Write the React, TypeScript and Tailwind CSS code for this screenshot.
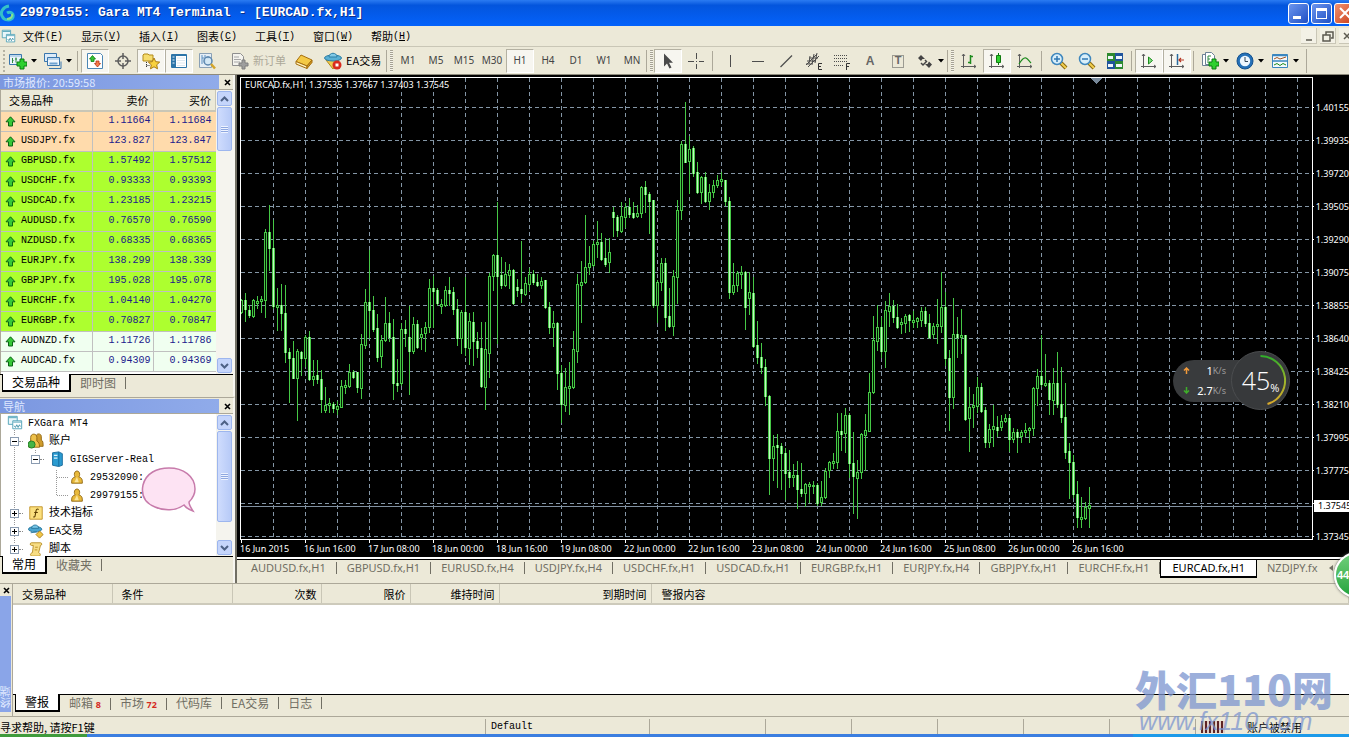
import React from "react";

const mono = "font-['Liberation_Mono','Noto_Sans_CJK_SC',monospace]";
const cjk = "font-['Noto_Sans_CJK_SC',sans-serif]";
const chartFont = "font-['Noto_Sans',sans-serif]";

const menus = [
  ["文件", "F"],
  ["显示", "V"],
  ["插入", "I"],
  ["图表", "C"],
  ["工具", "T"],
  ["窗口", "W"],
  ["帮助", "H"],
];

const quotes = [
  { symbol: "EURUSD.fx", bid: "1.11664", ask: "1.11684", bg: "bg-[#ffdbac]" },
  { symbol: "USDJPY.fx", bid: "123.827", ask: "123.847", bg: "bg-[#ffdbac]" },
  { symbol: "GBPUSD.fx", bid: "1.57492", ask: "1.57512", bg: "bg-[#adff2f]" },
  { symbol: "USDCHF.fx", bid: "0.93333", ask: "0.93393", bg: "bg-[#adff2f]" },
  { symbol: "USDCAD.fx", bid: "1.23185", ask: "1.23215", bg: "bg-[#adff2f]" },
  { symbol: "AUDUSD.fx", bid: "0.76570", ask: "0.76590", bg: "bg-[#adff2f]" },
  { symbol: "NZDUSD.fx", bid: "0.68335", ask: "0.68365", bg: "bg-[#adff2f]" },
  { symbol: "EURJPY.fx", bid: "138.299", ask: "138.339", bg: "bg-[#adff2f]" },
  { symbol: "GBPJPY.fx", bid: "195.028", ask: "195.078", bg: "bg-[#adff2f]" },
  { symbol: "EURCHF.fx", bid: "1.04140", ask: "1.04270", bg: "bg-[#adff2f]" },
  { symbol: "EURGBP.fx", bid: "0.70827", ask: "0.70847", bg: "bg-[#adff2f]" },
  { symbol: "AUDNZD.fx", bid: "1.11726", ask: "1.11786", bg: "bg-[#f0fff0]" },
  { symbol: "AUDCAD.fx", bid: "0.94309", ask: "0.94369", bg: "bg-[#f0fff0]" },
];

const periods = ["M1", "M5", "M15", "M30", "H1", "H4", "D1", "W1", "MN"];

const chartTabs = [
  "AUDUSD.fx,H1",
  "GBPUSD.fx,H1",
  "EURUSD.fx,H4",
  "USDJPY.fx,H4",
  "USDCHF.fx,H1",
  "USDCAD.fx,H1",
  "EURGBP.fx,H1",
  "EURJPY.fx,H4",
  "GBPJPY.fx,H1",
  "EURCHF.fx,H1",
  "EURCAD.fx,H1",
];

const prices = [
  "1.40155", "1.39935", "1.39720", "1.39505", "1.39290", "1.39075", "1.38855",
  "1.38640", "1.38425", "1.38210", "1.37995", "1.37775", "1.37560", "1.37345",
];

const times = [
  "16 Jun 2015", "16 Jun 16:00", "17 Jun 08:00", "18 Jun 00:00", "18 Jun 16:00",
  "19 Jun 08:00", "22 Jun 00:00", "22 Jun 16:00", "23 Jun 08:00", "24 Jun 00:00",
  "24 Jun 16:00", "25 Jun 08:00", "26 Jun 00:00", "26 Jun 16:00",
];

// high, body top, body bottom, low, 1 = bull / 0 = bear
const candles = [
  [221,222,234,235,1],[215,222,231,243,0],[227,232,237,239,0],[221,222,238,239,1],[218,223,225,230,1],
  [218,221,223,234,1],[151,154,222,239,1],[127,154,170,192,0],[142,170,228,230,0],[210,227,229,252,1],
  [206,227,235,252,0],[207,235,274,284,0],[270,274,280,324,0],[263,280,300,300,0],[271,273,300,342,1],
  [273,274,280,297,0],[257,259,280,288,1],[253,259,301,302,0],[282,298,301,307,1],[282,297,301,305,0],
  [292,301,321,334,0],[309,327,332,334,1],[320,325,327,334,1],[324,326,330,334,0],[323,328,331,336,1],
  [302,308,329,329,1],[302,307,309,315,1],[286,294,308,309,1],[292,294,299,300,0],[294,294,309,314,0],
  [256,266,310,320,1],[211,224,267,270,1],[172,224,232,260,0],[218,232,251,253,0],[236,250,279,283,0],
  [257,262,278,289,1],[219,245,262,263,1],[234,245,259,263,0],[241,259,305,321,0],[281,305,307,313,0],
  [245,251,305,307,1],[242,251,255,268,0],[228,259,273,316,0],[239,246,273,275,1],[242,246,269,270,0],
  [250,256,259,271,1],[244,249,255,273,1],[201,210,249,254,1],[198,210,213,249,0],[210,212,225,227,0],
  [221,226,228,235,1],[208,212,227,228,1],[199,212,215,227,0],[209,214,231,236,0],[221,231,260,267,0],
  [232,234,260,275,1],[199,234,269,277,0],[235,243,270,286,1],[234,244,263,287,0],[254,263,270,279,0],
  [244,270,308,309,0],[244,271,309,331,1],[195,198,275,299,1],[176,177,198,212,1],[124,177,198,265,0],
  [179,197,207,210,0],[184,196,207,208,1],[186,192,197,210,1],[191,192,225,226,0],[201,209,212,218,0],
  [163,211,215,224,0],[199,205,216,217,1],[190,196,206,212,1],[192,196,204,206,0],[196,204,207,208,0],
  [199,203,207,210,1],[202,202,229,230,0],[224,229,249,255,0],[233,245,249,268,1],[244,245,295,311,0],
  [287,295,326,344,0],[290,309,327,333,1],[284,308,310,336,1],[253,271,309,310,1],[196,206,273,284,1],
  [183,204,207,244,1],[137,189,204,205,1],[168,185,189,196,1],[163,166,187,188,1],[143,164,166,179,1],
  [155,164,181,182,0],[160,180,186,188,0],[160,174,184,194,1],[129,134,139,158,0],[137,139,152,158,0],
  [124,138,153,154,1],[125,129,139,149,1],[120,129,136,139,0],[124,135,139,140,0],[127,135,138,139,1],
  [108,109,135,139,1],[103,109,116,134,0],[114,116,123,155,0],[122,122,227,229,0],[202,204,227,244,1],
  [180,185,204,212,1],[180,185,239,252,0],[210,238,248,249,0],[192,198,248,257,1],[122,132,199,225,1],
  [63,66,132,141,1],[24,66,84,84,0],[58,71,83,115,1],[68,70,95,98,0],[84,94,114,115,0],
  [98,99,114,125,1],[94,99,123,124,0],[106,114,123,131,1],[102,107,114,119,1],[97,102,107,109,1],
  [94,101,103,107,1],[102,102,123,127,0],[119,123,214,220,0],[185,207,214,216,1],[193,195,207,213,1],
  [188,194,196,210,1],[193,194,229,251,0],[194,214,220,236,1],[199,215,268,269,0],[243,267,279,285,0],
  [265,279,289,295,0],[281,289,318,327,0],[317,318,380,416,0],[357,368,380,402,1],[356,367,369,409,0],
  [365,368,375,411,0],[370,375,395,421,0],[372,394,399,409,0],[386,397,399,408,1],[383,397,411,430,0],
  [385,411,415,418,0],[405,406,415,428,1],[404,406,408,424,1],[403,407,408,415,1],[405,407,425,427,0],
  [403,419,424,427,1],[390,393,419,420,1],[383,384,392,399,1],[375,383,385,390,1],[335,353,384,390,1],
  [335,353,356,372,0],[330,337,355,374,1],[335,337,385,399,0],[354,385,398,435,0],[382,394,400,440,1],
  [355,356,394,400,1],[336,352,357,392,1],[295,314,353,353,1],[238,262,314,315,1],[227,249,263,272,1],
  [239,249,273,279,0],[223,232,273,289,1],[215,228,233,248,1],[222,228,239,244,0],[226,239,249,250,0],
  [240,244,246,255,1],[236,238,245,254,1],[236,237,242,253,0],[233,242,244,249,1],[239,240,243,249,1],
  [229,233,242,248,1],[229,233,245,248,0],[236,245,259,260,0],[245,248,256,260,1],[221,246,248,265,1],
  [194,229,248,254,1],[214,229,280,287,0],[272,280,319,352,0],[220,256,319,330,1],[239,256,259,279,0],
  [231,257,259,275,1],[257,257,341,342,0],[309,329,340,373,1],[316,327,329,349,1],[299,309,328,334,1],
  [305,309,333,334,0],[329,332,364,369,0],[346,351,364,369,1],[327,348,351,368,1],[338,349,352,358,0],
  [337,343,349,352,1],[336,340,343,344,1],[337,340,361,373,0],[350,354,361,364,1],[351,354,359,374,0],
  [352,354,358,364,1],[345,352,354,358,1],[349,350,352,364,1],[309,310,350,357,1],[291,298,310,327,1],
  [257,298,306,308,0],[276,305,307,308,1],[302,305,321,336,0],[290,305,322,336,1],[274,305,326,329,0],
  [289,326,339,344,0],[305,339,374,380,0],[365,373,384,420,0],[377,384,416,419,0],[403,416,439,449,0],
  [419,439,441,449,1],[424,429,440,441,1],[409,427,430,449,1],
];

function Svg({ children, size = 18 }: { children: React.ReactNode; size?: number }) {
  return (
    <svg width={size} height={size} viewBox="0 0 18 18" fill="none" className="shrink-0" aria-hidden="true">
      {children}
    </svg>
  );
}

const plus = (
  <path d="M11 7h4v3h3v4h-3v3h-4v-3H8v-4h3z" fill="#2fd02f" stroke="#0b7d12" />
);

const icons: Record<string, React.ReactNode> = {
  windows: (
    <>
      <path d="M1.500 1.500h10v9h-10z" fill="#e8f6fa" stroke="#4a9fb5" />
      <path d="M2 3h9" stroke="#4a9fb5" />
      <path d="M6.500 6.500h10v9h-10z" fill="#fff" stroke="#4a9fb5" />
      <path d="M7 8h9" stroke="#4a9fb5" />
      <path d="M8 12l1.500 2 1.500-3 1.500 3 1.500-3 1 2" stroke="#3c8fa5" />
    </>
  ),
  newChart: (
    <>
      <path d="M.5 2.500h12v10H.5z" fill="#eaf3fb" stroke="#3a76ad" />
      <path d="M1 4h11" stroke="#8fb8dc" />
      <path d="M3.500 6v5M3 8.500h1.500M7 5.500v5M6 7h2" stroke="#2e8b40" />
      {plus}
    </>
  ),
  profiles: (
    <>
      <path d="M.5 1.500h12v8H.5z" fill="#dcebf8" stroke="#3a76ad" />
      <path d="M3.500 5.500h12v8h-12z" fill="#eef6fd" stroke="#3a76ad" />
      <path d="M4 7h11" stroke="#8fb8dc" />
      <path d="M5 16.500h12v-7" stroke="#3a76ad" />
      <path d="M5.500 11.500h8" stroke="#6fa3d0" strokeWidth="2" />
    </>
  ),
  market: (
    <>
      <path d="M1.500 1.500h13l2 2v13h-15z" fill="#fff" stroke="#4c86b5" />
      <path d="M6.500 3.500l3 3.500H8v2.500H5V7H3.500z" fill="#35c135" stroke="#0b7d12" strokeWidth=".8" />
      <path d="M11.500 15l-3-3.500H10V9h3v2.500h1.500z" fill="#f47a4a" stroke="#b53413" strokeWidth=".8" />
    </>
  ),
  target: (
    <>
      <circle cx="9" cy="9" r="5" stroke="#5d5d5d" strokeWidth="1.500" />
      <path d="M9 1v6M9 11v6M1 9h6M11 9h6" stroke="#5d5d5d" strokeWidth="1.500" />
    </>
  ),
  navigator: (
    <>
      <path d="M1 3l1-1h4l1 1h4v6H1z" fill="#f6dc6c" stroke="#b18a1b" />
      <path d="M4.500 10v6M4.500 13.500H8" stroke="#333" strokeDasharray="1 1" />
      <path d="M12 6l1.700 3.700 4 .4-3 2.700.8 4L12 14.800 8.500 16.800l.8-4-3-2.700 4-.4z" fill="#f9d23e" stroke="#a97a10" />
    </>
  ),
  terminal: (
    <>
      <rect x="1" y="2" width="16" height="14" rx="1" fill="#2c74a8" />
      <path d="M6 4h10v11H6z" fill="#fff" />
      <path d="M2.500 5h2M2.500 8h2M2.500 11h2" stroke="#e8f3fb" />
      <path d="M7 6h8M7 8.500h8M7 11h8M7 13.500h8" stroke="#dde8f0" />
    </>
  ),
  tester: (
    <>
      <path d="M1.500 1.500h12v14h-12z" fill="#e5eef6" stroke="#8aa0b5" />
      <path d="M4 3v9M4 6h2M7 3v8M10 4v3" stroke="#5a8fc0" />
      <circle cx="10" cy="9" r="4" fill="#cfe6f5" fillOpacity=".8" stroke="#5b86ae" strokeWidth="1.500" />
      <path d="M13 12l4 4.500" stroke="#d3a52a" strokeWidth="2.500" />
    </>
  ),
  order: (
    <>
      <path d="M1.500 1.500h8l3 3v9h-11z" fill="#f4f3ee" stroke="#8f8f8f" />
      <path d="M3 5h5M3 7.500h7M3 10h6" stroke="#a6a6a6" />
      <path d="M11 8h3v3h3v3h-3v3h-3v-3H8v-3h3z" fill="#9e9e9e" stroke="#7e7e7e" />
    </>
  ),
  editor: (
    <>
      <path d="M6 3l11 5-5 6L1 9.500z" fill="#f4c945" stroke="#a66f0d" />
      <path d="M1 9.500V12l11 4.500V14z" fill="#fff1bd" stroke="#a66f0d" />
      <path d="M12 16.500l5-6V8l-5 6z" fill="#d19a24" stroke="#a66f0d" />
    </>
  ),
  expert: (
    <>
      <path d="M2 8l7 9 6-9z" fill="#f0c94e" stroke="#b08a1d" />
      <ellipse cx="9" cy="6" rx="8.500" ry="3" fill="#5ab0d4" stroke="#2c7ea5" />
      <path d="M5 5c0-5 8-5 8 0z" fill="#82c9e6" stroke="#2c7ea5" />
      <circle cx="13" cy="13" r="4.500" fill="#d92b1e" />
      <path d="M11.500 11.500h3v3h-3z" fill="#fff" />
    </>
  ),
  cursor: <path d="M5 1.500v13l3-3 2.500 5 2-1-2.500-4.800h4z" fill="#4a4a4a" />,
  cross: <path d="M9.500 1v6M9.500 12v5M1 9.500h6M12 9.500h5M9 9.500h1" stroke="#4d4d4d" />,
  vline: <path d="M9.500 3v12" stroke="#4d4d4d" />,
  hline: <path d="M3 9.500h12" stroke="#4d4d4d" />,
  trend: <path d="M3.500 15L15 3.500" stroke="#4d4d4d" strokeWidth="1.200" />,
  channel: (
    <>
      <path d="M1 13L12 2M3 15L14 4M2 9h9M4 6h9M1 12h7M5 4l-1 8M9 2L7 12M12 1l-2 10" stroke="#4d4d4d" />
      <path d="M17 11.500h-3.500v6H17M13 14.500h3" stroke="#333" />
    </>
  ),
  fib: (
    <>
      <path d="M1 3.500h13M1 6.500h13M1 9.500h13M1 13.500h9" stroke="#4d4d4d" strokeDasharray="1 1" />
      <path d="M17 11.500h-3.500V18M13 14.500h3" stroke="#333" />
    </>
  ),
  label: <path d="M3.500 3.500h11v12h-11z" stroke="#4d4d4d" strokeDasharray="1 1" />,
  arrows: (
    <>
      <path d="M5 3l4 4H6.500L5 9 2 6zM13 16l-4-4h2.500L13 9.500l3 3z" fill="#444" />
      <path d="M9 8l2 2M5 11l2 2 3-3" stroke="#444" strokeWidth="1.500" />
    </>
  ),
  bars: (
    <>
      <path d="M3.500 2v14M1 14.500h15M2 4l1.500-2L5 4M14 13l2 1.500-2 1.500" stroke="#5d5d5d" />
      <path d="M10.500 3v9M8 10.500h2.500M10.500 4.500H13" stroke="#1c8a1c" strokeWidth="1.500" />
    </>
  ),
  candles: (
    <>
      <path d="M3.500 2v14M1 14.500h15M2 4l1.500-2L5 4M14 13l2 1.500-2 1.500" stroke="#5d5d5d" />
      <path d="M10.500 1v12" stroke="#117a11" />
      <path d="M8.500 3.500h4v7h-4z" fill="#2fd02f" stroke="#117a11" />
    </>
  ),
  line: (
    <>
      <path d="M3.500 2v14M1 14.500h15M2 4l1.500-2L5 4M14 13l2 1.500-2 1.500" stroke="#5d5d5d" />
      <path d="M3 12c3-5 5-7 7-6s3 3 5 5" stroke="#1c8a1c" strokeWidth="1.200" />
    </>
  ),
  zoomIn: (
    <>
      <path d="M11 11l5 5" stroke="#8a6a10" strokeWidth="4" />
      <path d="M11 11l5 5" stroke="#f2cf4f" strokeWidth="2" />
      <circle cx="7" cy="7" r="5.500" fill="#d9effa" stroke="#3f87bd" strokeWidth="1.500" />
      <path d="M4 7h6M7 4v6" stroke="#2f78b3" strokeWidth="1.500" />
    </>
  ),
  zoomOut: (
    <>
      <path d="M11 11l5 5" stroke="#8a6a10" strokeWidth="4" />
      <path d="M11 11l5 5" stroke="#f2cf4f" strokeWidth="2" />
      <circle cx="7" cy="7" r="5.500" fill="#d9effa" stroke="#3f87bd" strokeWidth="1.500" />
      <path d="M4 7h6" stroke="#2f78b3" strokeWidth="1.500" />
    </>
  ),
  tile: (
    <>
      <path d="M1 1h8v8H1z" fill="#2d8a2f" />
      <path d="M9 1h8v8H9z" fill="#1f549b" />
      <path d="M1 9h8v8H1z" fill="#1f549b" />
      <path d="M9 9h8v8H9z" fill="#2d8a2f" />
      <path d="M2 4h5v3H2zM10 4h6v3h-6zM2 12h5v3H2zM10 12h6v3h-6z" fill="#eef6fb" />
    </>
  ),
  scroll: (
    <>
      <path d="M3.500 2v14M1 14.500h15M2 4l1.500-2L5 4M14 13l2 1.500-2 1.500" stroke="#5d5d5d" />
      <path d="M8.500 5v7l4-3.500z" fill="#7fe07f" stroke="#1c8a1c" />
    </>
  ),
  shift: (
    <>
      <path d="M3.500 2v14M1 14.500h15M2 4l1.500-2L5 4M14 13l2 1.500-2 1.500" stroke="#5d5d5d" />
      <path d="M9.500 2v11" stroke="#276a9e" strokeWidth="1.500" />
      <path d="M16 8h-5M13 6l-2 2 2 2" stroke="#b5331f" strokeWidth="1.200" />
    </>
  ),
  template: (
    <>
      <path d="M1.500 2.500h7v11h-7z" fill="#fff" stroke="#6d8296" />
      <path d="M4.500.5h6l3 3v9h-9z" fill="#fff" stroke="#6d8296" />
      <path d="M7 4v7M7 4h3M7 7h2" stroke="#2e8b40" />
      {plus}
    </>
  ),
  clock: (
    <>
      <circle cx="9" cy="9" r="8" fill="#2470b8" stroke="#13508d" />
      <circle cx="9" cy="9" r="5.200" fill="#eef7ff" />
      <path d="M9 5v4.500h3" stroke="#33475b" />
    </>
  ),
  indicators: (
    <>
      <path d="M1.500 2.500h15v13h-15z" fill="#f3f9fd" stroke="#3a86bf" />
      <path d="M1 3.500h16M1 9h16" stroke="#3a86bf" strokeWidth="1.500" />
      <path d="M3 7l3-1.500L9 7l3-1 3-1" stroke="#a4541d" />
      <path d="M3 13l3-1.500L9 13.500l3-2 3 1.500" stroke="#1c8a1c" />
    </>
  ),
  account: (
    <>
      <path d="M6 6c0-5 6-5 6 0 0 2-1 3-1 3 4 1 4 3 4 7H3c0-4 0-6 4-7 0 0-1-1-1-3z" fill="#e8b93a" stroke="#8f6410" />
      <path d="M9 9l-3 6h5z" fill="#fbe59a" />
    </>
  ),
  accounts: (
    <>
      <path d="M9 4c0-4 6-4 6 0v4c2 1 2 3 2 7H9z" fill="#cf9c2c" stroke="#8f6410" />
      <path d="M3 5c0-5 7-5 7 0v4c2 1 3 3 3 7H1c0-4 0-6 2-7z" fill="#eec14a" stroke="#8f6410" />
      <circle cx="4" cy="13" r="4" fill="#45b445" stroke="#1d7a22" />
    </>
  ),
  server: (
    <>
      <path d="M4 2l7-1 4 2v13l-4 1.500L4 16z" fill="#2b9bd0" stroke="#14689a" />
      <path d="M11 1v16" stroke="#14689a" />
      <path d="M5.500 5h4M5.500 8h4" stroke="#dff3fd" strokeWidth="1.500" />
    </>
  ),
  fx: (
    <>
      <path d="M2 2h14v14H2z" fill="#fbe07e" stroke="#c08f22" />
      <path d="M12 5c-2-1-3 0-3 2l-1 5c0 1-1 2-2 1M7 8.500h4" stroke="#5a3d00" strokeWidth="1.200" />
    </>
  ),
  ea: (
    <>
      <ellipse cx="8" cy="7" rx="7.500" ry="3" fill="#4aa5d0" stroke="#26759c" />
      <path d="M4 6c0-5 8-5 8 0z" fill="#77c4e4" stroke="#26759c" />
      <path d="M3 11l7-1" stroke="#26759c" />
      <path d="M13 9l4 4-4 4-4-4z" fill="#f2c746" stroke="#a67916" />
    </>
  ),
  script: (
    <>
      <path d="M4 2h10c2 0 2 3 0 3l-2 8c2 1 3 4 0 4H5c-3 0-3-3 0-4l1-8H4C2 5 2 2 4 2z" fill="#f7dd84" stroke="#b58b22" />
      <path d="M8 7h3M7.500 10h3" stroke="#b58b22" />
    </>
  ),
};

function ToolButton({ icon, label, pressed, menu }: { icon: string; label: string; pressed?: boolean; menu?: boolean }) {
  return (
    <button
      aria-label={label}
      className={
        "h-6 shrink-0 flex items-center " +
        (menu ? "w-[35px] pl-1 gap-1 " : "w-7 justify-center ") +
        (pressed ? "bg-[#f7f6f0] border border-[#b4b1a2] border-r-white border-b-white" : "")
      }
    >
      <Svg>{icons[icon]}</Svg>
      {menu && <Caret />}
    </button>
  );
}

function Caret() {
  return (
    <svg width="6" height="4" viewBox="0 0 6 4" className="shrink-0" aria-hidden="true">
      <path d="M0 0h6L3 3.500z" fill="#000" />
    </svg>
  );
}

function Separator() {
  return <span className="w-px h-5 mx-[2px] mr-[3px] shrink-0 bg-[#aca899]" />;
}

function Gripper() {
  return (
    <span className="w-2 h-[22px] shrink-0 flex justify-between border-l border-[#aca899] pl-[3px] pr-px">
      <span className="w-[3px] bg-[repeating-linear-gradient(#a5a294_0_1px,#f5f3ea_1px_2px)]" />
    </span>
  );
}

function Toolbar() {
  return (
    <div className="h-[29px] shrink-0 flex items-center bg-[#ece9d8] border-t border-b border-t-[#c9c6b6] border-b-[#8d8a7c] pr-1">
      <span className="w-[5px] h-[22px] shrink-0 border-r-2 border-dotted border-[#b5b2a3]" />
      <ToolButton icon="newChart" label="新图表" menu />
      <ToolButton icon="profiles" label="配置" menu />
      <Separator />
      <ToolButton icon="market" label="市场报价" pressed />
      <ToolButton icon="target" label="数据窗口" />
      <ToolButton icon="navigator" label="导航" pressed />
      <ToolButton icon="terminal" label="终端" pressed />
      <ToolButton icon="tester" label="测试" />
      <button className="h-6 w-[69px] shrink-0 flex items-center gap-1 pl-[10px] text-[11px] whitespace-nowrap text-[#aca899]">
        <Svg>{icons.order}</Svg>新订单
      </button>
      <ToolButton icon="editor" label="编辑器" />
      <button className="h-6 w-[68px] shrink-0 flex items-center gap-1 pl-[6px] text-[11px] whitespace-nowrap">
        <Svg>{icons.expert}</Svg>EA交易
      </button>
      <Gripper />
      {periods.map((p) => (
        <button
          key={p}
          className={
            "w-7 h-6 shrink-0 font-['Noto_Sans',sans-serif] text-[10px] text-[#444] " +
            (p === "H1" ? "bg-[#f7f6f0] border border-[#b4b1a2] border-r-white border-b-white" : "")
          }
        >
          {p}
        </button>
      ))}
      <Gripper />
      <ToolButton icon="cursor" label="光标" pressed />
      <ToolButton icon="cross" label="十字" />
      <Separator />
      <ToolButton icon="vline" label="垂直线" />
      <ToolButton icon="hline" label="水平线" />
      <ToolButton icon="trend" label="趋势线" />
      <ToolButton icon="channel" label="通道" />
      <ToolButton icon="fib" label="斐波那契" />
      <button className="w-7 h-6 shrink-0 font-['Liberation_Sans',sans-serif] text-xs font-bold text-[#666]">A</button>
      <button className="w-7 h-6 shrink-0 grid place-items-center font-['Liberation_Sans',sans-serif] text-[11px] font-bold text-[#666]">
        <span className="col-start-1 row-start-1">
          <Svg>{icons.label}</Svg>
        </span>
        <span className="col-start-1 row-start-1">T</span>
      </button>
      <ToolButton icon="arrows" label="箭头" menu />
      <Gripper />
      <ToolButton icon="bars" label="柱状图" />
      <ToolButton icon="candles" label="阴阳烛" pressed />
      <ToolButton icon="line" label="折线图" />
      <Separator />
      <ToolButton icon="zoomIn" label="放大" />
      <ToolButton icon="zoomOut" label="缩小" />
      <ToolButton icon="tile" label="平铺" />
      <Separator />
      <ToolButton icon="scroll" label="自动滚动" pressed />
      <ToolButton icon="shift" label="图表平移" pressed />
      <Separator />
      <ToolButton icon="template" label="模板" menu />
      <ToolButton icon="clock" label="时间周期" menu />
      <ToolButton icon="indicators" label="技术指标" menu />
      <span className="w-px h-6 ml-1 shrink-0 bg-[#aca899]" />
    </div>
  );
}

function TitleBar() {
  return (
    <header className="h-[26px] shrink-0 flex items-center justify-between bg-linear-to-b from-[#2a7bf2] via-[#0355dd] via-20% to-[#0462fb]">
      <div className="flex items-center gap-[5px]">
        <svg width="15" height="18" viewBox="0 0 15 18" fill="none" aria-hidden="true">
          <path d="M9 2C3 3 0 8 2 12c2 5 9 5 11 1 1-4-3-6-6-4" stroke="#35c0c9" strokeWidth="3" />
          <path d="M12 10c1 3-2 5-5 5" stroke="#8be08a" strokeWidth="2" />
        </svg>
        <h1 className={`${mono} text-[13px] font-bold text-white whitespace-pre [text-shadow:1px_1px_0_#0a2e88]`}>
          29979155: Gara MT4 Terminal - [EURCAD.fx,H1]
        </h1>
      </div>
      <div className="flex gap-[2px] -mr-[6px]">
        <button aria-label="最小化" className="w-[21px] h-[21px] rounded-[3px] border border-white bg-linear-to-br from-[#6c95ee] to-[#1f4fc4] flex items-end p-1">
          <span className="w-2 h-[3px] bg-white" />
        </button>
        <button aria-label="最大化" className="w-[21px] h-[21px] rounded-[3px] border border-white bg-linear-to-br from-[#6c95ee] to-[#1f4fc4] flex items-center justify-center">
          <span className="w-[11px] h-[11px] border border-t-[3px] border-white" />
        </button>
        <button aria-label="关闭" className="w-[21px] h-[21px] rounded-[3px] border border-white bg-linear-to-br from-[#f0916f] to-[#c93a12] flex items-center justify-center">
          <svg width="12" height="12" viewBox="0 0 12 12" aria-hidden="true">
            <path d="M1 1l10 10M11 1L1 11" stroke="#fff" strokeWidth="2" />
          </svg>
        </button>
      </div>
    </header>
  );
}

function MenuBar() {
  return (
    <nav className="h-5 shrink-0 flex items-center justify-between bg-[#ece9d8]">
      <div className="flex items-center">
        <span className="ml-px mr-[7px]">
          <Svg size={15}>{icons.windows}</Svg>
        </span>
        {menus.map(([name, key]) => (
          <button key={key} className="flex items-center w-[58px] text-[11px]">
            {name}
            <span className={`${mono} text-[10px]`}>
              (<u>{key}</u>)
            </span>
          </button>
        ))}
      </div>
      <div className="flex gap-[3px] -mr-[6px]">
        {["M3 10h6", "M4 5V2h7v6H9M1 5h7v6H1z", "M3 3l6 6M9 3l-6 6"].map((d) => (
          <button key={d} aria-label="图表窗口" className="w-4 h-4 flex items-center justify-center bg-[#f3f1e6] border-r border-b border-[#c9c6b6]">
            <svg width="12" height="12" viewBox="0 0 12 12" fill="none" aria-hidden="true">
              <path d={d} stroke="#5c5a50" strokeWidth="1.500" />
            </svg>
          </button>
        ))}
      </div>
    </nav>
  );
}

function CloseButton() {
  return (
    <button aria-label="关闭面板" className="w-3 h-3 flex items-center justify-center">
      <svg width="7" height="7" viewBox="0 0 7 7" aria-hidden="true">
        <path d="M1 1l5 5M6 1L1 6" stroke="#000" strokeWidth="1.600" />
      </svg>
    </button>
  );
}

function PanelTitle({ children }: { children: React.ReactNode }) {
  return (
    <div className="h-[14px] shrink-0 flex items-center justify-between">
      <h2 className="h-[14px] w-[219px] pl-[3px] text-[11px] leading-[14px] text-[#dfe8ff] bg-linear-to-r from-[#7b97e0] to-[#90abea] truncate">
        {children}
      </h2>
      <CloseButton />
    </div>
  );
}

function ScrollBar({ thumb }: { thumb: string }) {
  const arrow = "w-[15px] h-[15px] shrink-0 rounded-[2px] border border-[#9db6ee] bg-[#c5d5fb] flex items-center justify-center";
  return (
    <div className="w-[17px] shrink-0 flex flex-col items-center bg-[#f5f4ee] py-px">
      <button aria-label="向上" className={arrow}>
        <svg width="9" height="6" viewBox="0 0 9 6" fill="none" aria-hidden="true">
          <path d="M1 5l3.500-3.500L8 5" stroke="#4d6185" strokeWidth="2" />
        </svg>
      </button>
      <span className={`${thumb} w-[15px] mt-px rounded-[2px] border border-[#9db6ee] bg-linear-to-r from-[#cfdcfd] to-[#b7caf7] flex items-center justify-center`}>
        <span className="w-[7px] h-[7px] bg-[repeating-linear-gradient(#eef3ff_0_1px,#8fa8e0_1px_2px)]" />
      </span>
      <span className="flex-1" />
      <button aria-label="向下" className={arrow}>
        <svg width="9" height="6" viewBox="0 0 9 6" fill="none" aria-hidden="true">
          <path d="M1 1l3.500 3.500L8 1" stroke="#4d6185" strokeWidth="2" />
        </svg>
      </button>
    </div>
  );
}

function PanelTabs({ active, rest }: { active: string; rest: React.ReactNode[] }) {
  return (
    <div className="h-[22px] shrink-0 flex items-start border-t border-black bg-[#ece9d8] pl-[2px] text-xs leading-4 whitespace-nowrap">
      <button className="h-[18px] -mt-px px-[9px] bg-white border border-t-0 border-black border-b-2 border-r-2">{active}</button>
      {rest.map((tab, i) => (
        <span key={i} className="flex items-center">
          <button className="px-[9px] text-[#716f64]">{tab}</button>
          <span className="w-px h-3 bg-[#716f64]" />
        </span>
      ))}
    </div>
  );
}

function MarketWatch() {
  return (
    <section className="shrink-0 flex flex-col border-r-2 border-[#f7f6f0]">
      <PanelTitle>市场报价: 20:59:58</PanelTitle>
      <div className="flex h-[285px] overflow-hidden border-t border-l border-[#aca899] bg-white">
        <table className="flex-1 border-collapse table-fixed self-start">
          <colgroup>
            <col className="w-[91px]" />
            <col className="w-[61px]" />
            <col />
          </colgroup>
          <thead>
            <tr className="h-[21px] bg-[#ece9d8] text-[11px] leading-4">
              <th className="font-normal text-left pl-2 border-b-2 border-r border-[#c9c6b6]">交易品种</th>
              <th className="font-normal text-right pr-1 border-b-2 border-r border-[#c9c6b6]">卖价</th>
              <th className="font-normal text-right pr-1 border-b-2 border-r border-[#c9c6b6]">买价</th>
            </tr>
          </thead>
          <tbody className={`${mono} text-[10px] leading-4`}>
            {quotes.map((q) => (
              <tr key={q.symbol} className={`h-5 ${q.bg} border-b border-[#c0c0c0]`}>
                <td className="border-r border-[#c0c0c0]">
                  <span className="flex items-center gap-[5px] pl-1">
                    <svg width="11" height="11" viewBox="0 0 11 11" aria-hidden="true">
                      <path d="M5.500 .8l4.500 5H7.500V10h-4V5.800H1z" fill="#37c837" stroke="#0a6414" />
                    </svg>
                    {q.symbol}
                  </span>
                </td>
                <td className="text-right pr-[2px] text-[#20208c] border-r border-[#c0c0c0]">{q.bid}</td>
                <td className="text-right pr-1 text-[#20208c]">{q.ask}</td>
              </tr>
            ))}
          </tbody>
        </table>
        <ScrollBar thumb="h-11" />
      </div>
      <PanelTabs active="交易品种" rest={["即时图"]} />
    </section>
  );
}

function TreeRow({ indent, box, icon, children }: { indent: string; box?: string; icon: string; children: React.ReactNode }) {
  return (
    <li className={`h-[18px] shrink-0 flex items-center gap-[5px] ${indent}`}>
      {box && (
        <span className="flex items-center">
          <button aria-label="展开" className="w-[9px] h-[9px] flex items-center justify-center border border-[#8a9bb0] bg-white">
            <svg width="7" height="7" viewBox="0 0 7 7" aria-hidden="true">
              <path d={box === "+" ? "M1 3.500h5M3.500 1v5" : "M1 3.500h5"} stroke="#000" />
            </svg>
          </button>
          <span className="w-1 border-t border-dotted border-[#888]" />
        </span>
      )}
      <Svg size={16}>{icons[icon]}</Svg>
      <span className="whitespace-nowrap">{children}</span>
    </li>
  );
}

function Navigator() {
  return (
    <section className="flex-1 min-h-0 flex flex-col mt-px pt-px pb-[5px] border-t border-[#aca899] border-r-2 border-r-[#f7f6f0]">
      <PanelTitle>导航</PanelTitle>
      <div className="relative flex-1 min-h-0 flex overflow-hidden border-t border-l border-[#aca899] bg-white">
        <ul className={`flex-1 min-w-0 flex flex-col overflow-hidden ${mono} text-[10px]`}>
          <TreeRow indent="pl-[6px]" icon="windows">FXGara MT4</TreeRow>
          <TreeRow indent="pl-[9px]" box="-" icon="accounts"><span className="text-[11px]">账户</span></TreeRow>
          <TreeRow indent="pl-[30px]" box="-" icon="server">GIGServer-Real</TreeRow>
          <TreeRow indent="pl-[68px]" icon="account">29532090:</TreeRow>
          <TreeRow indent="pl-[68px]" icon="account">29979155:</TreeRow>
          <TreeRow indent="pl-[9px]" box="+" icon="fx"><span className="text-[11px]">技术指标</span></TreeRow>
          <TreeRow indent="pl-[9px]" box="+" icon="ea"><span>EA</span><span className="text-[11px]">交易</span></TreeRow>
          <TreeRow indent="pl-[9px]" box="+" icon="script"><span className="text-[11px]">脚本</span></TreeRow>
        </ul>
        <ScrollBar thumb="h-[91px]" />
        {/* tree guides */}
        <svg width="80" height="140" viewBox="0 0 80 140" fill="none" className="absolute left-0 top-0 pointer-events-none" aria-hidden="true">
          <path d="M13.500 16v6M13.500 33v61M13.500 104v8M13.500 122v8M34.500 36v4M55.500 56v25M56 63.500h12M56 81.500h12" stroke="#999" strokeDasharray="1 1" />
        </svg>
        <svg width="56" height="48" viewBox="0 0 56 48" className="absolute left-[140px] top-[52px]" aria-hidden="true">
          <path d="M43 39C35 45 23 45 14 41 4 37 0 29 2 19 5 7 16 2 28 2c14 0 26 8 26 21 0 6-2 9-6 13 0 3 2 6 4 9-3-1-7-3-9-6z" fill="#fde3f3" stroke="#c77bab" strokeWidth="1.500" />
        </svg>
      </div>
      <PanelTabs active="常用" rest={["收藏夹"]} />
    </section>
  );
}

function Plot() {
  return (
    <svg width="100%" height="100%" className="block absolute inset-0" shapeRendering="crispEdges" aria-label="EURCAD H1">
      {Array.from({ length: 33 }, (_, i) => (
        <line key={i} x1={32 * (i + 1) + 0.5} x2={32 * (i + 1) + 0.5} y1="0" y2="100%" stroke="#8496a6" strokeDasharray="4 3" />
      ))}
      {prices.map((p, i) => (
        <line key={p} x1="0" x2="100%" y1={29.5 + 33 * i} y2={29.5 + 33 * i} stroke="#8496a6" strokeDasharray="4 3" />
      ))}
      <line x1="0" x2="100%" y1="428.5" y2="428.5" stroke="#8090a0" />
      <path d="M850 0h11l-5.500 6z" fill="#778899" />
      {candles.map(([hi, top, bot, lo, up], i) => (
        <g key={i}>
          <rect x={4 * i} y={hi} width="1" height={lo - hi + 1} fill="#46c846" />
          <rect x={4 * i - 1} y={top} width="3" height={bot - top + 1} fill="#46c846" />
          {up ? (
            <rect x={4 * i} y={top + 1} width="1" height={Math.max(bot - top - 1, 0)} fill="#001c00" />
          ) : (
            <rect x={4 * i} y={top} width="1" height={bot - top + 1} fill="#c4f8c4" />
          )}
        </g>
      ))}
    </svg>
  );
}

function SpeedMeter() {
  return (
    <div className="absolute right-[59px] top-[276px] flex items-center">
      <div className="w-[80px] h-[42px] -mr-[22px] pr-[27px] rounded-l-full bg-[#393b3d] flex flex-col justify-center font-['Noto_Sans',sans-serif] text-[11px] leading-5 text-white">
        {[
          { d: "M3.500 7V1M1 3.500L3.500 1 6 3.500", color: "#f29a3a", value: "1" },
          { d: "M3.500 0v6M1 3.500L3.500 6 6 3.500", color: "#3fae2a", value: "2.7" },
        ].map((r) => (
          <div key={r.value} className="flex items-center pl-[10px]">
            <svg width="7" height="7" viewBox="0 0 7 7" fill="none" aria-hidden="true">
              <path d={r.d} stroke={r.color} strokeWidth="1.500" />
            </svg>
            <span className="flex-1 text-right">{r.value}</span>
            <span className="text-[9px] text-[#9a9a9a]">K/s</span>
          </div>
        ))}
      </div>
      <div className="relative w-[59px] h-[59px] rounded-full bg-[#37393b] border border-[#4b4d4f] flex items-center justify-center text-white font-['Open_Sans',sans-serif]">
        <svg width="57" height="57" viewBox="0 0 57 57" fill="none" className="absolute inset-0" aria-hidden="true">
          <defs>
            <linearGradient id="load" x1="0" y1="0" x2="0" y2="1">
              <stop offset="0" stopColor="#2fae2a" />
              <stop offset=".5" stopColor="#9ab52c" />
              <stop offset="1" stopColor="#d9a92b" />
            </linearGradient>
          </defs>
          <path d="M28.500 4a24.500 24.500 0 0 1 7 48" stroke="url(#load)" strokeWidth="2" />
        </svg>
        <span className="text-[25px] font-light leading-none">45</span>
        <span className="self-end mb-[16px] text-[11px] leading-none">%</span>
      </div>
    </div>
  );
}

function Chart() {
  return (
    <section className="relative flex-1 min-w-0 flex flex-col border-l-2 border-[#716f64]">
      <div className="flex-1 min-h-0 flex bg-black pl-[3px] pt-[2px]">
        <div className="flex-1 min-w-0 flex flex-col">
          <div className="relative flex-1 border border-white overflow-hidden">
            <Plot />
            <p className={`relative pl-1 ${chartFont} text-[9px] leading-[14px] text-white whitespace-pre`}>
              EURCAD.fx,H1{"  "}1.37535 1.37667 1.37403 1.37545
            </p>
          </div>
          <div className={`h-[17px] shrink-0 flex ${chartFont} text-[9px] leading-3 text-white`}>
            {times.map((t) => (
              <span key={t} className="w-16 shrink-0 whitespace-nowrap">
                <span className="block w-px h-[3px] ml-px bg-white" />
                {t}
              </span>
            ))}
          </div>
        </div>
        <div className={`relative w-9 shrink-0 pt-[14px] overflow-hidden ${chartFont} text-[9px] text-white`}>
          {prices.map((p) => (
            <div key={p} className="h-[33px] flex items-center gap-[2px]">
              <span className="w-[3px] h-px bg-white" />
              {p}
            </div>
          ))}
          <span className="absolute left-px top-[423px] w-full h-3 pl-1 bg-white text-black leading-3">1.37545</span>
        </div>
      </div>
      <div className="h-[22px] mb-[4px] shrink-0 flex border-t-2 border-white bg-[#ece9d8]">
        <div className="flex-1 min-w-0 flex items-start border-t border-black pl-1 font-['Noto_Sans',sans-serif] text-[11px] leading-4 overflow-hidden">
          {chartTabs.map((t) =>
            t === "EURCAD.fx,H1" ? (
              <button key={t} className="h-[18px] px-[11px] shrink-0 bg-white border border-t-0 border-b-2 border-black">{t}</button>
            ) : (
              <span key={t} className="shrink-0 flex items-center">
                <button className="px-[10px] text-[#716f64]">{t}</button>
                <span className="w-px h-3 bg-[#716f64]" />
              </span>
            )
          )}
          <button className="flex-1 min-w-0 pl-[10px] text-left whitespace-nowrap overflow-hidden text-[#716f64]">NZDJPY.fx</button>
          <button aria-label="向左滚动" className="w-5 h-4 shrink-0">
            <svg width="4" height="6" viewBox="0 0 4 6" aria-hidden="true">
              <path d="M4 0v6L0 3z" fill="#716f64" />
            </svg>
          </button>
        </div>
      </div>
      <SpeedMeter />
      <div className="absolute -right-[31px] bottom-[-15px] w-[46px] h-[46px] z-10 rounded-full border-2 border-white bg-linear-to-b from-[#6fd07c] to-[#1fa33c] shadow-[0_0_3px_#555] flex items-center pl-[1px] font-['Liberation_Sans',sans-serif] text-[11px] font-bold text-white">
        44
      </div>
    </section>
  );
}

function Terminal() {
  const cols = [
    ["交易品种", "w-[99px] text-left pl-[9px]"],
    ["条件", "w-[120px] text-left pl-[9px]"],
    ["次数", "w-[89px] text-right pr-1"],
    ["限价", "w-[89px] text-right pr-1"],
    ["维持时间", "w-[89px] text-right pr-1"],
    ["到期时间", "w-[152px] text-right pr-1"],
    ["警报内容", "text-left pl-[10px]"],
  ];
  return (
    <section className="shrink-0 flex border-t border-[#aca899] bg-[#ece9d8]">
      <div className="w-3 shrink-0 flex flex-col">
        <CloseButton />
        <h2 className="flex-1 min-h-0 mr-px mb-1 pb-1 flex items-end overflow-hidden bg-[#8aa5e8] text-[11px] leading-[11px] text-[#dfe8ff]">
          <span className="[writing-mode:vertical-rl] rotate-180">终端</span>
        </h2>
      </div>
      <div className="flex-1 min-w-0 border-l border-[#aca899]">
        <div className="h-[110px] bg-white">
          <table className="w-full table-fixed border-collapse">
            <thead>
              <tr className="h-5 bg-[#ece9d8] text-[11px] leading-4">
                {cols.map(([name, cls]) => (
                  <th key={name} className={`font-normal border-b-2 border-[#cdcabb] border-r border-r-[#c9c6b6] ${cls}`}>{name}</th>
                ))}
              </tr>
            </thead>
          </table>
        </div>
        <PanelTabs
          active="警报"
          rest={[
            <>邮箱 <b className="font-['Noto_Sans',sans-serif] text-[9px] text-[#d42a1e]">8</b></>,
            <>市场 <b className="font-['Noto_Sans',sans-serif] text-[9px] text-[#d42a1e]">72</b></>,
            "代码库",
            "EA交易",
            "日志",
          ]}
        />
      </div>
    </section>
  );
}

function StatusBar() {
  return (
    <footer className="shrink-0">
      <div className="h-[18px] flex items-center border-t border-[#aca899] bg-[#ece9d8] pt-[3px] text-[11px] leading-4 whitespace-nowrap">
        <span className="w-[486px] border-r border-[#aca899] h-4">寻求帮助, 请按F1键</span>
        <span className={`w-[164px] h-4 pl-[5px] border-r border-[#aca899] ${mono} text-[10px]`}>Default</span>
        <span className="w-[116px] h-4 border-r border-[#aca899]" />
        <span className="w-[86px] h-4 border-r border-[#aca899]" />
        <span className="w-[86px] h-4 border-r border-[#aca899]" />
        <span className="w-[86px] h-4 border-r border-[#aca899]" />
        <span className="w-[86px] h-4 border-r border-[#aca899]" />
        <span className="w-[86px] h-4 border-r border-[#aca899]" />
        <span className="w-6 h-3 ml-[5px] bg-[repeating-linear-gradient(90deg,#5d2424_0_2px,#e0cfc6_2px_4px)]" />
        <span className="ml-[22px]">账户被禁用</span>
      </div>
      <div className="h-[3px] flex">
        <span className="w-[87px] bg-[#3f9b3c]" />
        <span className="flex-1 bg-[#3b7ee0]" />
        <span className="w-[216px] bg-[#1c9ae9]" />
      </div>
    </footer>
  );
}

export default function App() {
  return (
    <div className={`relative h-screen flex flex-col overflow-hidden bg-[#ece9d8] text-black ${cjk}`}>
      <TitleBar />
      <MenuBar />
      <Toolbar />
      <main className="flex-1 min-h-0 flex">
        <div className="w-[235px] shrink-0 flex flex-col">
          <MarketWatch />
          <Navigator />
        </div>
        <Chart />
      </main>
      <Terminal />
      <StatusBar />
      <div className="absolute right-4 bottom-1 flex flex-col text-[#7c95cf] opacity-75 pointer-events-none">
        <span className="text-[41px] leading-[42px] font-black whitespace-nowrap">外汇110网</span>
        <span className="pl-1 font-['Liberation_Sans',sans-serif] text-[25px] leading-6 italic">www.fx110.com</span>
      </div>
    </div>
  );
}
